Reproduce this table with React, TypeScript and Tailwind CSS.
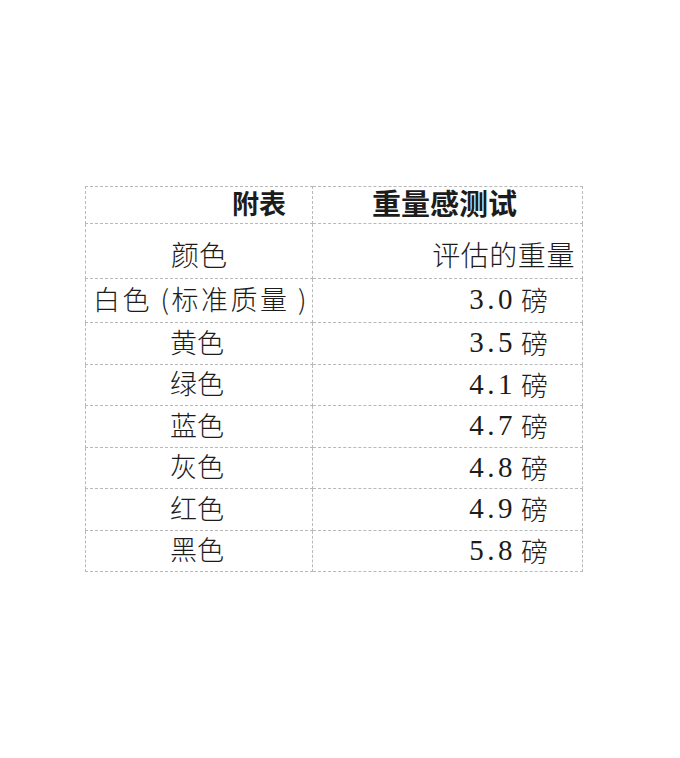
import React from 'react';

const rows = [
  { color: '白色 (标准质量 )', weight: '3.0', wide: true },
  { color: '黄色', weight: '3.5' },
  { color: '绿色', weight: '4.1' },
  { color: '蓝色', weight: '4.7' },
  { color: '灰色', weight: '4.8' },
  { color: '红色', weight: '4.9' },
  { color: '黑色', weight: '5.8' },
];

const heights = ['h-[44px]', 'h-[42px]', 'h-[41px]', 'h-[42px]', 'h-[41px]', 'h-[42px]', 'h-[41px]'];

const cell = 'border border-dashed border-[#b9b9b9] p-0';

export default function App() {
  return (
    <div className="min-h-[758px] w-[680px] bg-white pt-[186px] pl-[85px] text-[#1c1c1c] font-['Liberation_Serif','Noto_Sans_CJK_SC',serif]">
      <table className="w-[497px] border-collapse table-fixed">
        <colgroup>
          <col className="w-[227px]" />
          <col className="w-[270px]" />
        </colgroup>
        <tbody>
          <tr className="h-[37px]">
            <td className={`${cell} text-right pr-[26px] align-middle`}>
              <span className="font-['Noto_Sans_CJK_SC',sans-serif] font-bold text-[27px] leading-none">附表</span>
            </td>
            <td className={`${cell} text-left pl-[59px] align-middle`}>
              <span className="font-['Noto_Sans_CJK_SC',sans-serif] font-bold text-[29px] leading-none">重量感测试</span>
            </td>
          </tr>
          <tr className="h-[55px]">
            <td className={`${cell} text-center align-bottom pb-[5px]`}>
              <span className="font-['Noto_Sans_CJK_SC',sans-serif] font-light text-[28px] leading-none">颜色</span>
            </td>
            <td className={`${cell} text-right pr-[7px] align-bottom pb-[5px]`}>
              <span className="font-['Noto_Sans_CJK_SC',sans-serif] font-light text-[28px] leading-none tracking-[0.02em]">评估的重量</span>
            </td>
          </tr>
          {rows.map((r, i) => (
            <tr key={r.color} className={heights[i]}>
              <td className={`${cell} ${r.wide ? 'text-left pl-[7px] tracking-[2.5px]' : 'text-center pr-[4px]'} align-middle`}>
                <span className="font-['Noto_Sans_CJK_SC',sans-serif] font-light text-[27px] leading-none whitespace-nowrap">
                  {r.color}
                </span>
              </td>
              <td className={`${cell} text-right pr-[34px] align-middle`}>
                <span className="inline-flex items-center gap-[5px] leading-none">
                  <span className="text-[29px] tracking-[0.12em] font-['Liberation_Serif',serif]">{r.weight}</span>
                  <span className="font-['Noto_Sans_CJK_SC',sans-serif] font-light text-[27px]">磅</span>
                </span>
              </td>
            </tr>
          ))}
        </tbody>
      </table>
    </div>
  );
}
